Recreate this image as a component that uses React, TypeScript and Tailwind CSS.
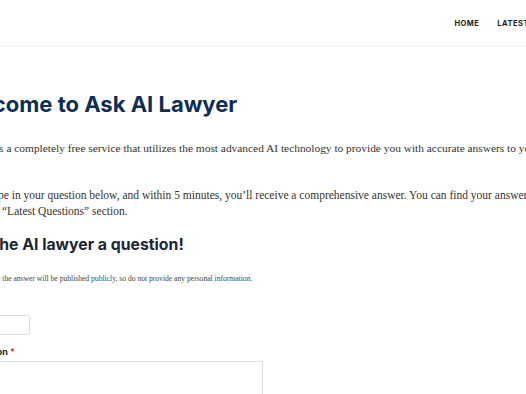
import React from "react";

export default function App() {
  const serif = { fontFamily: '"Liberation Serif", "DejaVu Serif", serif' };
  const sans = { fontFamily: 'Inter, "Liberation Sans", sans-serif' };
  return (
    <div className="w-[526px] h-[394px] overflow-hidden bg-white relative">
      <header className="h-[47px] border-b border-[#f0f0f0] flex items-center justify-end" style={sans}>
        <nav className="flex items-center gap-[18px] text-[7.5px] font-bold tracking-[0.5px] text-[#222] -mr-[3px] pt-[1px]">
          <span>HOME</span>
          <span>LATEST</span>
        </nav>
      </header>
      <main className="pt-[43px]">
        <h1 className="ml-[-48px] text-[22px] font-bold leading-[28px] text-[#0c2f55] whitespace-nowrap" style={sans}>
          Welcome to Ask AI Lawyer
        </h1>
        <p className="ml-[-11px] mt-[22px] text-[11.4px] leading-[16px] text-[#333] whitespace-nowrap" style={serif}>
          It’s a completely free service that utilizes the most advanced AI technology to provide you with accurate answers to your legal questions.
        </p>
        <p className="ml-[-14px] mt-[31px] text-[11.5px] leading-[16px] text-[#333] whitespace-nowrap" style={serif}>
          Type in your question below, and within 5 minutes, you’ll receive a comprehensive answer. You can find your answer in the
          <br />
          <span className="ml-[16px] inline-block">“Latest Questions” section.</span>
        </p>
        <h2 className="ml-[-40px] mt-[15px] text-[15.8px] font-bold leading-[22px] text-[#1b2636] whitespace-nowrap" style={sans}>
          Ask the AI lawyer a question!
        </h2>
        <p className="ml-[-34px] mt-[18px] text-[7.6px] leading-[10px] text-[#444] whitespace-nowrap" style={serif}>
          Please note the answer will be published <span className="text-[#1a4f8a]">publicly</span>, so do not provide any personal information.
        </p>
        <div className="ml-[-20px] mt-[31px] w-[50px] h-[20px] border border-[#dddddd] rounded-[2px]" />
        <label className="block ml-[-32px] mt-[11px] text-[9px] leading-[12px] font-bold text-[#222]" style={sans}>
          Question <span className="text-[#e03030]">*</span>
        </label>
        <div className="ml-[-20px] mt-[3px] w-[283px] h-[60px] border border-[#dddddd] rounded-[2px]" />
      </main>
    </div>
  );
}
